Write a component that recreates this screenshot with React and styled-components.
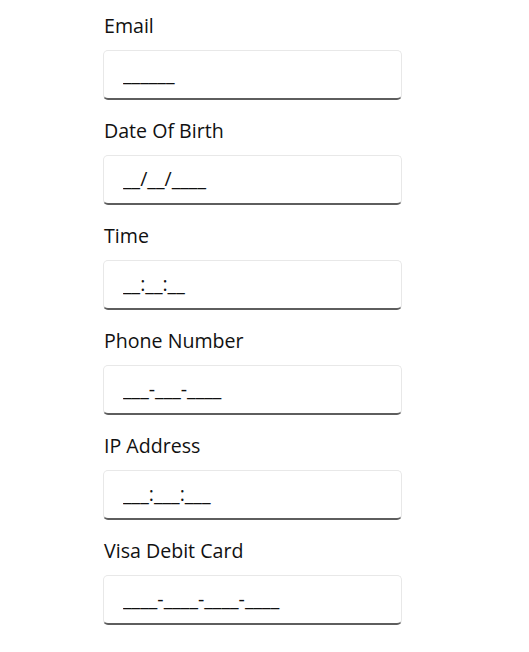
import React from "react";
import styled, { createGlobalStyle } from "styled-components";

const Global = createGlobalStyle`
  html, body { margin: 0; padding: 0; background: #ffffff; }
  body { font-family: "Open Sans", "Noto Sans", sans-serif; color: #1b1b1b; }
`;

const Form = styled.div`
  display: flex;
  flex-direction: column;
  gap: 17px;
  padding: 12px 0 0 103px;
  width: 300px;
`;

const Field = styled.label`
  display: flex;
  flex-direction: column;
  gap: 10px;
`;

const Label = styled.span`
  font-size: 19.6px;
  line-height: 28px;
  padding-left: 1px;
  color: #111111;
`;

const MaskBox = styled.input`
  box-sizing: border-box;
  height: 50px;
  width: 299px;
  margin: 0;
  padding: 0 18px 2px 19px;
  font-family: "Open Sans", "Noto Sans", sans-serif;
  font-size: 19.6px;
  color: #111111;
  background: #ffffff;
  border: 1px solid #e8e8e8;
  border-bottom: 2px solid #5e5e5e;
  border-radius: 5px;
  outline: none;
`;

const fields = [
  { label: "Email", mask: "______" },
  { label: "Date Of Birth", mask: "__/__/____" },
  { label: "Time", mask: "__:__:__" },
  { label: "Phone Number", mask: "___-___-____" },
  { label: "IP Address", mask: "___:___:___" },
  { label: "Visa Debit Card", mask: "____-____-____-____" },
];

export default function App() {
  return (
    <>
      <Global />
      <Form>
        {fields.map((f) => (
          <Field key={f.label}>
            <Label>{f.label}</Label>
            <MaskBox type="text" readOnly defaultValue={f.mask} />
          </Field>
        ))}
      </Form>
    </>
  );
}
